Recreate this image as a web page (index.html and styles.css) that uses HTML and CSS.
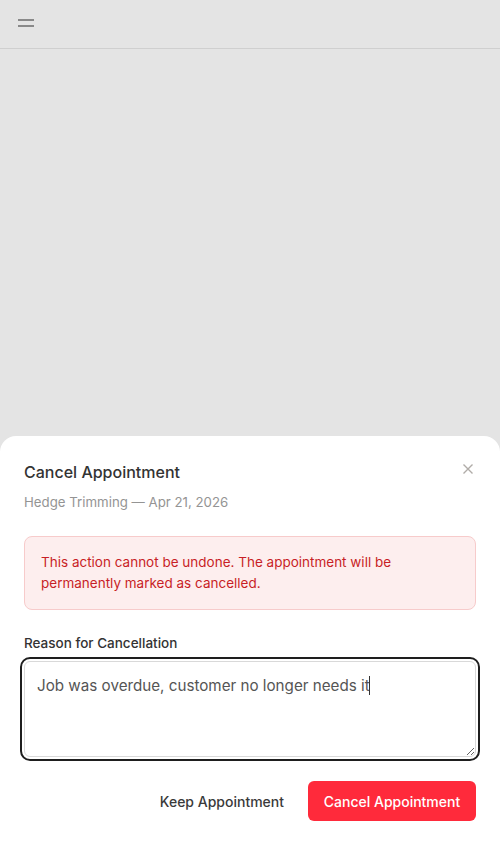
FILE: index.html
```html
<!DOCTYPE html>
<html lang="en">
<head>
<meta charset="utf-8">
<title>Cancel Appointment</title>
<link rel="stylesheet" href="styles.css">
</head>
<body>
<div class="app">
  <header class="topbar">
    <button class="menu-btn" aria-label="Menu">
      <svg width="18" height="10" viewBox="0 0 18 10"><path d="M1 2h16M1 8h16" stroke="#6b6b6b" stroke-width="1.6" fill="none"/></svg>
    </button>
  </header>
  <main class="backdrop"></main>
  <section class="sheet">
    <div class="sheet-head">
      <div>
        <h2 class="title">Cancel Appointment</h2>
        <p class="subtitle">Hedge Trimming — Apr 21, 2026</p>
      </div>
      <button class="close-btn" aria-label="Close">
        <svg width="12" height="12" viewBox="0 0 12 12"><path d="M1.5 1.5l9 9M10.5 1.5l-9 9" stroke="#b0aca8" stroke-width="1.4" fill="none"/></svg>
      </button>
    </div>
    <div class="alert">This action cannot be undone. The appointment will be permanently marked as cancelled.</div>
    <label class="label" for="reason">Reason for Cancellation</label>
    <div class="field">
      <textarea id="reason" class="textarea">Job was overdue, customer no longer needs it</textarea>
      <span class="caret"></span>
    </div>
    <div class="actions">
      <button class="btn-ghost">Keep Appointment</button>
      <button class="btn-danger">Cancel Appointment</button>
    </div>
  </section>
</div>
</body>
</html>
```
FILE: styles.css
```css
* { box-sizing: border-box; }
html, body { margin: 0; padding: 0; }
body {
  font-family: Inter, "Noto Sans", "Liberation Sans", sans-serif;
  background: #e4e4e4;
  color: #333;
}
.app {
  width: 500px;
  height: 845px;
  display: flex;
  flex-direction: column;
  overflow: hidden;
}
.topbar {
  height: 49px;
  flex: none;
  border-bottom: 1px solid #cfcfcf;
  display: flex;
  align-items: center;
  padding-left: 16px;
}
.menu-btn {
  border: 0;
  background: none;
  padding: 0;
  width: 20px;
  height: 20px;
  display: flex;
  align-items: center;
  justify-content: center;
  margin-top: -2px;
}
.backdrop { flex: 1; }
.sheet {
  flex: none;
  height: 409px;
  background: #fff;
  border-radius: 16px 16px 0 0;
  padding: 26px 24px 0 24px;
  display: flex;
  flex-direction: column;
}
.sheet-head {
  display: flex;
  justify-content: space-between;
  align-items: flex-start;
}
.title {
  margin: 0;
  font-size: 16px;
  font-weight: 500;
  line-height: 20px;
  color: #333;
}
.subtitle {
  margin: 10px 0 0;
  font-size: 13.25px;
  line-height: 20px;
  color: #949494;
}
.close-btn {
  border: 0;
  background: none;
  padding: 0;
  width: 14px;
  height: 14px;
  margin-top: 0;
  margin-right: 1px;
  display: flex;
  align-items: center;
  justify-content: center;
}
.alert {
  margin-top: 24px;
  background: #fdeeee;
  border: 1px solid #f7cbcb;
  border-radius: 8px;
  padding: 15px 16px;
  font-size: 13.5px;
  line-height: 21px;
  color: #c81e26;
}
.label {
  margin-top: 23px;
  font-size: 13.5px;
  font-weight: 500;
  line-height: 20px;
  color: #333;
}
.field {
  margin-top: 8px;
  position: relative;
  height: 96px;
}
.textarea {
  display: block;
  width: 100%;
  height: 100%;
  border: 1px solid #d9d9d9;
  border-radius: 6px;
  padding: 13px 12px;
  font-family: inherit;
  font-size: 15.2px;
  line-height: 22px;
  color: #555;
  resize: vertical;
  outline: 2px solid #1e1e1e;
  outline-offset: 2px;
}
.caret {
  position: absolute;
  left: 345px;
  top: 15px;
  width: 1px;
  height: 19px;
  background: #333;
}
.actions {
  margin-top: 24px;
  display: flex;
  justify-content: flex-end;
  align-items: center;
  gap: 8px;
}
.btn-ghost {
  border: 0;
  background: none;
  font-family: inherit;
  font-size: 14px;
  font-weight: 500;
  color: #3a3a3a;
  padding: 0 16px;
  height: 40px;
}
.btn-danger {
  border: 0;
  background: #ff2a3b;
  color: #fff;
  font-family: inherit;
  font-size: 14px;
  font-weight: 500;
  border-radius: 6px;
  height: 40px;
  width: 168px;
}
```
